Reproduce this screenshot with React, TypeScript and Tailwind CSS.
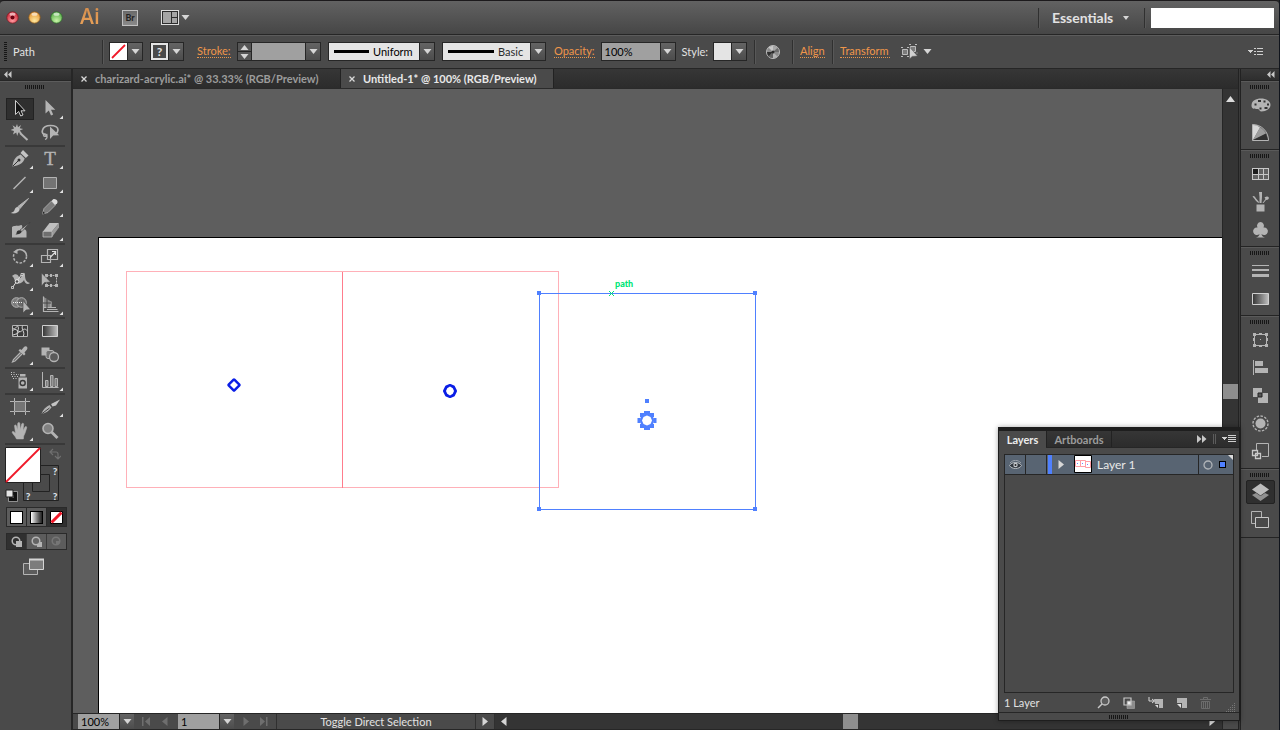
import type { ReactNode } from "react";

const UP = "#b4b4b4";

/* ---------- small shared pieces ---------- */

function Tri({ dir = "down", className = "fill-[#d6d6d6]" }: { dir?: "down" | "up" | "left" | "right"; className?: string }) {
  const d = {
    down: "M.5 2h8L4.500 7z",
    up: "M.5 7h8L4.500 2z",
    left: "M7.500 0v9L2 4.500z",
    right: "M1.500 0v9L7 4.500z",
  }[dir];
  return (
    <svg width="9" height="9" viewBox="0 0 9 9" className={className} aria-hidden="true">
      <path d={d} />
    </svg>
  );
}

function DropArrow({ label }: { label: string }) {
  return (
    <button aria-label={label} className="flex w-[15px] shrink-0 items-center justify-center border-l border-[#262626] bg-linear-to-b from-[#646464] to-[#4c4c4c]">
      <Tri />
    </button>
  );
}

function Divider({ className = "" }: { className?: string }) {
  return <span className={"w-[2px] shrink-0 border-l border-[#303030] bg-[#585858] " + className} />;
}

function Grip() {
  return <span className="mx-auto block h-[4px] w-[20px] bg-[repeating-linear-gradient(90deg,#161616_0_1px,#4a4a4a_1px_2px)]" />;
}

const field = "flex h-[19px] shrink-0 border border-[#262626]";
const link = "shrink-0 border-b border-dotted border-[#e8944a] text-[#f0964a] leading-3 whitespace-nowrap";

/* ---------- title bar ---------- */

function Light({ id, light, dark, ring, dot }: { id: string; light: string; dark: string; ring: string; dot?: boolean }) {
  return (
    <button aria-label={id}>
      <svg width="13" height="13" viewBox="0 0 13 13">
        <defs>
          <radialGradient id={id} cx="50%" cy="78%" r="70%">
            <stop offset="0" stopColor={light} />
            <stop offset="1" stopColor={dark} />
          </radialGradient>
        </defs>
        <circle cx="6.500" cy="6.500" r="5.700" fill={`url(#${id})`} stroke={ring} strokeWidth=".8" />
        <ellipse cx="6.500" cy="3.200" rx="3" ry="1.600" fill="#fff" opacity=".6" />
        {dot && <circle cx="6.500" cy="6.500" r="2" fill="#6c0010" />}
      </svg>
    </button>
  );
}

function TitleBar() {
  return (
    <header className="flex h-[35px] shrink-0 items-center rounded-t border-t border-b border-t-[#1c1a1c] border-b-[#262626] bg-linear-to-b from-[#626262] to-[#464646] pl-[6px]">
      <div className="flex gap-[9px]">
        <Light id="close" light="#ff9aa0" dark="#d02838" ring="#7c1c24" dot />
        <Light id="minimize" light="#ffe9a0" dark="#e89a38" ring="#8a5a20" />
        <Light id="zoom" light="#c8f4a8" dark="#5cb04c" ring="#2f6a2c" />
      </div>
      <span className="ml-[17px] w-[20px] bg-linear-to-b from-[#d08a4c] to-[#f0a85c] bg-clip-text pb-1 font-['Open_Sans'] text-[21px] leading-6 font-semibold text-transparent">Ai</span>
      <button className="ml-[22px] flex h-4 w-4 items-center justify-center border border-[#c0c0c0] bg-linear-to-b from-[#6a6a6a] to-[#8a8a8a] text-[9px] leading-3 font-bold text-[#222]">Br</button>
      <button aria-label="Arrange documents" className="ml-[23px] flex items-center gap-[2px]">
        <svg width="18" height="15" viewBox="0 0 18 15">
          <rect x=".5" y=".5" width="17" height="14" fill="#2c2c2c" stroke="#ddd" />
          <path d="M2 2h8v11H2zM11 2h5v5h-5zM11 8h5v5h-5z" fill="#a4a4a4" />
        </svg>
        <Tri />
      </button>
      <Divider className="ml-auto h-5" />
      <div className="relative ml-[12px] flex w-[77px] items-center">
        <select aria-label="Workspace" className="w-full appearance-none bg-transparent text-[14px] leading-5 font-bold text-[#e2e2e2] outline-none">
          <option>Essentials</option>
        </select>
        <svg width="6" height="4" viewBox="0 0 6 4" className="pointer-events-none absolute right-0 fill-[#d6d6d6]">
          <path d="M0 0h6L3 4z" />
        </svg>
      </div>
      <Divider className="ml-[15px] h-5" />
      <input aria-label="Search" className="mr-[5px] ml-[5px] h-5 w-[123px] bg-white px-1 text-black outline-none" />
    </header>
  );
}

/* ---------- control bar ---------- */

function ControlBar() {
  return (
    <div className="flex h-[34px] shrink-0 items-center border-t border-b border-t-[#5c5c5c] border-b-[#262626] bg-[#4a4a4a] pb-px pl-1">
      <span className="h-5 w-[3px] bg-[repeating-linear-gradient(180deg,#161616_0_1px,#4a4a4a_1px_2px)]" />
      <span className="w-[95px] shrink-0 pl-[6px] text-[#e2e2e2]">Path</span>
      <Divider className="h-6" />

      <div className={field + " ml-[5px]"}>
        <button aria-label="Fill">
          <svg width="17" height="17" viewBox="0 0 17 17">
            <path d="M0 0h17v17H0z" fill="#fff" />
            <path d="M2 15l13-13" stroke="#f01828" strokeWidth="1.800" />
          </svg>
        </button>
        <DropArrow label="Fill options" />
      </div>
      <div className={field + " ml-[7px]"}>
        <button aria-label="Stroke colour" className="w-[17px] border-2 border-[#e4e4e4] bg-[#4a4a4a] text-[12px] leading-3 font-bold text-[#e4e4e4]">?</button>
        <DropArrow label="Stroke colour options" />
      </div>

      <a href="#stroke" className={link + " ml-[13px] min-w-[34px]"}>Stroke:</a>
      <div className={field + " ml-[6px]"}>
        <div className="flex w-[14px] flex-col border-r border-[#262626] bg-[#565656]">
          <button aria-label="Increase stroke" className="flex h-[9px] items-center justify-center border-b border-[#262626]"><Tri dir="up" /></button>
          <button aria-label="Decrease stroke" className="flex h-[8px] items-center justify-center"><Tri /></button>
        </div>
        <input aria-label="Stroke weight" className="w-[53px] bg-[#a0a0a0] px-1 text-black outline-none" />
        <DropArrow label="Stroke weights" />
      </div>

      <div className={field + " ml-[7px] w-[107px] bg-[#e4e4e4]"}>
        <span className="mt-[7px] ml-[5px] h-[3px] w-[35px] shrink-0 bg-black" />
        <select aria-label="Width profile" className="min-w-0 flex-1 appearance-none bg-transparent pl-[4px] text-black outline-none"><option>Uniform</option></select>
        <DropArrow label="Width profiles" />
      </div>
      <div className={field + " ml-[7px] w-[104px] bg-[#e4e4e4]"}>
        <span className="mt-[7px] ml-[5px] h-[3px] w-[46px] shrink-0 bg-black" />
        <select aria-label="Brush" className="min-w-0 flex-1 appearance-none bg-transparent pl-[4px] text-[#2a2a2a] outline-none"><option>Basic</option></select>
        <DropArrow label="Brushes list" />
      </div>

      <a href="#opacity" className={link + " ml-[8px] min-w-[40px]"}>Opacity:</a>
      <div className={field + " ml-[6px]"}>
        <input aria-label="Opacity" defaultValue="100%" className="w-[58px] bg-[#a0a0a0] px-[3px] text-black outline-none" />
        <DropArrow label="Opacity options" />
      </div>
      <span className="ml-[6px] min-w-[26px] text-[#e2e2e2]">Style:</span>
      <div className={field + " ml-[5px]"}>
        <button aria-label="Graphic style" className="w-[17px] bg-[#e4e4e4]" />
        <DropArrow label="Graphic styles" />
      </div>

      <Divider className="ml-[7px] h-6" />
      <button aria-label="Recolor artwork" className="ml-[9px]">
        <svg width="16" height="16" viewBox="0 0 16 16">
          <circle cx="8" cy="8" r="6.500" fill="#8c8c8c" stroke="#bcbcbc" />
          <path d="M8 8L3.500 3.500A6 6 0 0 1 8 2z" fill="#c8c8c8" />
          <path d="M8 8V2A6 6 0 0 1 12.500 4z" fill="#a8a8a8" />
          <path d="M8 8L2 8A6 6 0 0 0 3.700 12.400z" fill="#303030" />
          <path d="M8 8L3.700 12.400A6 6 0 0 0 8 14z" fill="#646464" />
          <path d="M8 8v6A6 6 0 0 0 12.400 12.400z" fill="#b4b4b4" />
          <path d="M8 8L14 8A6 6 0 0 0 12.500 4z" fill="#6c6c6c" />
          <circle cx="8" cy="8" r="1.500" fill="#2c2c2c" />
        </svg>
      </button>
      <Divider className="ml-[11px] h-6" />
      <a href="#align" className={link + " ml-[6px] min-w-[25px]"}>Align</a>
      <Divider className="ml-[7px] h-6" />
      <a href="#transform" className={link + " ml-[6px] min-w-[50px]"}>Transform</a>
      <button aria-label="Select similar" className="ml-[11px] flex items-center gap-[4px]">
        <svg width="18" height="16" viewBox="0 0 18 16">
          <path d="M1.500 5.500h5v5h-5zM9.500 2.500h5v5h-5z" fill="#7c7c7c" stroke="#bcbcbc" />
          <path d="M0 3.500h2M6 3.500h2M0 12.500h2M6 12.500h2M8 .5h2M14 .5h2M15.500 9h1" stroke="#bcbcbc" />
          <path d="M8.500 3v12l2.700-2.600 5.300-.4z" fill="#d0d0d0" stroke="#4a4a4a" strokeWidth=".5" />
        </svg>
        <Tri />
      </button>
      <button aria-label="Control bar menu" className="mr-[16px] ml-auto">
        <svg width="15" height="9" viewBox="0 0 15 9" shapeRendering="crispEdges">
          <path d="M0 3h5L2.500 6z" fill="#d0d0d0" />
          <path d="M6 1h2M6 4h2M6 7h2M9 1h6M9 4h6M9 7h6" transform="translate(0 .5)" stroke="#d0d0d0" />
        </svg>
      </button>
    </div>
  );
}

/* ---------- tools panel ---------- */

type Tool = { name: string; more?: boolean; art: ReactNode };

const groups: Tool[][] = [
  [
    { name: "Selection", art: <path d="M10.500 3.500v14l3.200-3 2 4.500 2.300-1-2-4.200h4z" fill="#141414" stroke="#cfcfcf" /> },
    { name: "Direct Selection", more: true, art: <path d="M10.500 3v13.500l3.300-3 2.200 5 2.200-1-2.200-4.700h4.300z" fill={UP} /> },
    {
      name: "Magic Wand",
      art: (
        <>
          <path d="M12 3l1 3.200L16 4l-1.300 3.300 3.500.7-3.300 1.500 2 3-3.500-1-1.200 3.500-1-3.500L8 13.500l1-3.500-3.400-1L9 7.500 7.500 4.200l3.200 2z" fill={UP} />
          <path d="M15 12l7.500 7" stroke={UP} strokeWidth="2" />
        </>
      ),
    },
    {
      name: "Lasso",
      art: (
        <>
          <path d="M12 14.500c-4-.5-5.500-3-4.500-5.500 1-3 4-4.500 8-4.500 4.500 0 7.500 2 7.500 4.500 0 1.500-1 3-2.500 4" fill="none" stroke={UP} strokeWidth="1.700" />
          <path d="M12 14.500c-1-2.500-4-2-3.500 0 .5 1.500 3 1 3.500 0 .3 2-.5 3.500-2 4" fill="none" stroke={UP} strokeWidth="1.200" />
          <path d="M15 5.500v12.500l3.200-3.500 6-.2z" fill={UP} />
        </>
      ),
    },
  ],
  [
    {
      name: "Pen",
      more: true,
      art: (
        <>
          <path d="M7.500 19.500c.5-6 2.500-9.500 8.200-12l4 4C18 16.500 14 18.500 7.500 19.500z" fill={UP} />
          <path d="M15.500 6l2.500-3 5.500 5.500-2.700 2.500z" fill="#c4c4c4" />
          <path d="M8 19l5.500-5.500" stroke="#333" />
          <circle cx="14" cy="13" r="1.500" fill="#333" />
        </>
      ),
    },
    { name: "Type", more: true, art: <text x="15" y="18" textAnchor="middle" fontFamily="Liberation Serif, serif" fontSize="19" fill={UP} stroke={UP} strokeWidth=".4">T</text> },
    { name: "Line Segment", more: true, art: <path d="M8.500 18L20.500 6" stroke={UP} strokeWidth="1.400" /> },
    { name: "Rectangle", more: true, art: <path d="M8.500 6.500h13v11h-13z" fill="#747474" stroke={UP} /> },
    {
      name: "Paintbrush",
      art: (
        <>
          <path d="M23.500 3.500L15 13.500l-2-2z" fill={UP} stroke={UP} />
          <path d="M12.500 12c1.500 0 2.500 1.500 2 3-1 3-5 4-9 3 3-1 3.500-1.500 4.200-3.500.5-1.500 1.500-2.500 2.800-2.500z" fill="#c4c4c4" />
        </>
      ),
    },
    {
      name: "Pencil",
      more: true,
      art: (
        <>
          <path d="M7.500 19l1.500-5.500L16.500 6l4 4-7.500 7.500z" fill="#7c7c7c" stroke={UP} strokeWidth=".8" />
          <path d="M16.500 6c1.500-2.500 3-2.500 4.500-1.500s2 2.500 1 4l-2 1.500z" fill="#dcdcdc" />
          <path d="M7.500 19l.8-2.500 1.700 1.700z" fill="#222" />
        </>
      ),
    },
    {
      name: "Blob Brush",
      art: (
        <>
          <path d="M7 8c2-2 6-.5 9-2 1.500 0 1.500 2 1 3.500 3 .5 4.500 1.500 4.500 3.500v5.500H7z" fill={UP} />
          <path d="M11.500 14.500c0-3.500 3-4 4.500-2.700s-.5 4-5.500 3.700z" fill="#333" />
          <path d="M25 3.500L17 12.500l-2-1.500z" fill={UP} stroke="#333" strokeWidth=".6" />
        </>
      ),
    },
    {
      name: "Eraser",
      more: true,
      art: (
        <>
          <path d="M14.500 4h9.500L17 12.500H8z" fill="#c0c0c0" />
          <path d="M24 4v4.500L17 18v-5.500z" fill="#9a9a9a" />
          <path d="M8 12.500h9V18H8z" fill="#6e6e6e" stroke="#bcbcbc" strokeWidth=".8" />
        </>
      ),
    },
  ],
  [
    {
      name: "Rotate",
      more: true,
      art: (
        <>
          <path d="M10.500 6.500A6.500 6.500 0 0 1 21.500 11.500" fill="none" stroke={UP} strokeWidth="1.500" />
          <path d="M21.500 11.500A6.500 6.500 0 1 1 9 9" fill="none" stroke={UP} strokeWidth="1.500" strokeDasharray="2.500 1.500" />
          <path d="M8 7l4.500-3v5z" fill={UP} />
        </>
      ),
    },
    {
      name: "Scale",
      more: true,
      art: (
        <>
          <path d="M12.500 4.500h10v10h-10zM6.500 10.500h9v7h-9z" fill="none" stroke={UP} strokeWidth="1.200" />
          <path d="M15 12.500l5-5M17 6.500h3.500V10" fill="none" stroke="#e0e0e0" strokeWidth="1.200" />
        </>
      ),
    },
    {
      name: "Width",
      more: true,
      art: (
        <>
          <path d="M7 7c3-3 6-2 7 1 1 2 2 1 3-2s3-3 3 0c0 4 1 7 5 8-2 2-5 1-6-3-2 4-7 5-9 1-1-2-1-4-3-5z" fill={UP} />
          <path d="M7.500 18.500l9-13" stroke="#ddd" />
          <path d="M6.500 17.500h2v2h-2zM16 4.500h2v2h-2z" fill="#4a4a4a" stroke="#ddd" strokeWidth=".8" />
          <circle cx="12" cy="12.500" r="1.800" fill="#4a4a4a" stroke="#eee" />
        </>
      ),
    },
    {
      name: "Free Transform",
      art: (
        <>
          <path d="M11.500 6.500h10v10h-10z" fill="none" stroke={UP} strokeDasharray="2 1" />
          <path d="M10 5h3v3h-3zM20 5h3v3h-3zM10 15h3v3h-3zM20 15h3v3h-3zM15 5h2v3h-2zM15 15h2v3h-2z" fill={UP} />
          <path d="M6.500 4v13l3-3.500 6-.5z" fill={UP} stroke="#444" strokeWidth=".5" />
        </>
      ),
    },
    {
      name: "Shape Builder",
      more: true,
      art: (
        <>
          <circle cx="11.500" cy="9.500" r="4.800" fill="#7c7c7c" stroke={UP} />
          <circle cx="16.500" cy="9.500" r="4.800" fill="#6a6a6a" stroke={UP} />
          <path d="M8 9.500h11" stroke="#f0f0f0" strokeDasharray="1 1" />
          <path d="M18 7.500v12.500l3-3 4.500-.5z" fill={UP} stroke="#444" strokeWidth=".6" />
        </>
      ),
    },
    {
      name: "Perspective Grid",
      more: true,
      art: (
        <>
          <path d="M8 3.500l8 5V15H8z" fill={UP} opacity=".6" />
          <path d="M8.500 3.500v15.500M16 8.500V15M8 14.500h13M8 18.500h15.500M12 16.500h10.500" fill="none" stroke={UP} strokeWidth="1.200" />
          <path d="M12 6v9M8 10h8" stroke="#444" />
        </>
      ),
    },
  ],
  [
    {
      name: "Mesh",
      art: (
        <>
          <path d="M7.500 6.500h15v11h-15z" fill="#3a3a3a" stroke={UP} />
          <path d="M7.500 12c3-5 6 3 9 0s4-2 6 0M12 6.500c4 3-2 7 1 11M18 6.500c-3 3 3 7 0 11M7.500 9c2 2 3 0 5-2M8 16c3-1 5-1 7-4" fill="none" stroke="#d4d4d4" />
        </>
      ),
    },
    { name: "Gradient", art: <path d="M7.500 6.500h15v11h-15z" fill="url(#ramp)" stroke="#d0d0d0" /> },
    {
      name: "Eyedropper",
      more: true,
      art: (
        <>
          <path d="M15.500 9.500l-7 7-1 2.500 2.500-1 7-7" fill="#5a5a5a" stroke={UP} strokeWidth="1.200" />
          <path d="M13.500 7.500l1.500-1.500 1.500 1L19 4c2-2 4.500.5 3 2.500L19.500 9.500l1 1.500-1.500 1.500z" fill={UP} />
        </>
      ),
    },
    {
      name: "Blend",
      art: (
        <>
          <path d="M6.500 4.500h8v8h-8z" fill={UP} />
          <rect x="11" y="7.500" width="8" height="8" rx="2" fill="#707070" stroke={UP} />
          <circle cx="19" cy="14" r="4.500" fill="#5a5a5a" stroke={UP} strokeWidth="1.300" />
        </>
      ),
    },
  ],
  [
    {
      name: "Symbol Sprayer",
      more: true,
      art: (
        <>
          <path d="M13.500 8.500h8.500v11h-8.500z" fill={UP} />
          <path d="M15 7.500h5.500V5H15z" fill={UP} />
          <circle cx="17.700" cy="14" r="2.500" fill="none" stroke="#3a3a3a" strokeWidth="1.400" />
          <path d="M6 5.500h8M7 7.500h7M6 3.500h5M8 9.500h5" stroke="#c8c8c8" strokeDasharray="1 1.500" />
        </>
      ),
    },
    {
      name: "Column Graph",
      more: true,
      art: (
        <>
          <path d="M7.500 3v15.500h16" fill="none" stroke={UP} />
          <path d="M10.500 11.500h2.500v6h-2.500zM15.500 6.500h2.500v11h-2.500zM20 9.500h2.500v8H20z" fill="#7a7a7a" stroke={UP} />
        </>
      ),
    },
  ],
  [
    {
      name: "Artboard",
      art: (
        <>
          <path d="M9.500 6.500h11v10h-11z" fill="#747474" stroke={UP} />
          <path d="M9.500 3v3M20.500 3v3M9.500 17v3M20.500 17v3M5 6.500h4M5 16.500h4M21 6.500h4M21 16.500h4" stroke={UP} />
        </>
      ),
    },
    {
      name: "Slice",
      more: true,
      art: (
        <>
          <path d="M6.500 19c1-4 4-7 8-9l2 2.500C14 16 11 18 6.500 19z" fill={UP} />
          <path d="M16 9l9-4.500-4 6-3.500 1z" fill="#c4c4c4" />
          <path d="M6.500 19l8-6" stroke="#444" />
        </>
      ),
    },
    {
      name: "Hand",
      more: true,
      art: <path d="M11.500 20c-1-3-4-5-4.500-7 .5-1 2-.5 3.500 1.200L9.500 7c0-1.500 1.500-1.500 2 0l1 4 .2-6.500c.3-1.500 2-1.500 2.200 0l.3 6 1.500-5.500c.5-1.300 2-1 2 .5l-.7 6 2-3.500c1-1 2-.3 1.700 1-1 3-1.700 6-3 8l-.3 3z" fill={UP} stroke={UP} strokeWidth=".5" />,
    },
    {
      name: "Zoom",
      art: (
        <>
          <circle cx="13" cy="9.500" r="5" fill="#808080" stroke={UP} strokeWidth="1.600" />
          <path d="M16.500 13l6 6" stroke={UP} strokeWidth="2.800" />
        </>
      ),
    },
  ],
];

function ToolsPanel() {
  return (
    <aside className="flex w-[71px] shrink-0 flex-col bg-[#4a4a4a]">
      <button aria-label="Collapse tools" className="h-[12px] border-b border-[#262626] bg-linear-to-b from-[#3a3a3a] to-[#2e2e2e] pl-[4px]">
        <svg width="8" height="7" viewBox="0 0 8 7" fill="#c8c8c8"><path d="M3.500 0v7L0 3.500zM7.500 0v7L4 3.500z" /></svg>
      </button>
      <div className="border-t border-[#5c5c5c] pt-[3px] pr-[2px] pb-[8px]"><Grip /></div>
      <div className="flex flex-col pr-[6px] pl-[5px]">
        {groups.map((tools, g) => (
          <div key={g} className="grid grid-cols-2 border-b-2 border-[#393939]">
            {tools.map((tool) => (
              <button key={tool.name} aria-label={tool.name} className="flex h-6 items-center justify-center">
                <svg width="30" height="24" viewBox="0 0 30 24">
                  {tool.name === "Selection" && <rect x="1.500" y="1.500" width="27" height="21" fill="#2f2f2f" stroke="#222" />}
                  {tool.art}
                  {tool.more && <path d="M28 18.500v3.500h-3.500z" fill="#e0e0e0" />}
                </svg>
              </button>
            ))}
          </div>
        ))}

        <button aria-label="Fill and stroke" className="mt-[2px]">
          <svg width="56" height="56" viewBox="0 0 56 56" className="text-[10px] font-black">
            <path d="M18.500 18.500h35v35h-35zM27.500 27.500h17v17h-17z" fill="#4a4a4a" stroke="#222" />
            <g fill="#dce0ec" textAnchor="middle">
              <text x="50" y="28">?</text>
              <text x="23" y="53">?</text>
              <text x="50" y="53">?</text>
            </g>
            <path d="M.5.500h35v35H.500z" fill="#fff" stroke="#222" />
            <path d="M1 35L35 1" stroke="#f01828" strokeWidth="1.800" />
            <path d="M46 5h5q2 0 2 2v4M48 2l-3 3 3 3M50 9l3 3 3-3" fill="none" stroke="#707070" strokeWidth="1.200" />
            <path d="M5.500 46.500h5v6h-5z" fill="#4a4a4a" stroke="#111" strokeWidth="3" />
            <path d="M3.500 44.500h9v10h-9z" fill="none" stroke="#c0c0c0" strokeWidth=".6" />
            <path d="M1 43h7v7H1z" fill="#e4e4e4" stroke="#222" />
          </svg>
        </button>

        <div className="mt-[4px] ml-px flex w-[61px] border border-[#2a2a2a] bg-[#5c5c5c]">
          <button aria-label="Color" className="flex h-[18px] flex-1 items-center justify-center border-r border-[#2a2a2a]"><span className="h-[13px] w-[13px] border border-black bg-white" /></button>
          <button aria-label="Gradient fill" className="flex h-[18px] flex-1 items-center justify-center border-r border-[#2a2a2a]"><span className="h-[13px] w-[13px] border border-black bg-linear-to-r from-white to-[#222]" /></button>
          <button aria-label="None" className="flex h-[18px] flex-1 items-center justify-center bg-[#303030]">
            <svg width="13" height="13" viewBox="0 0 13 13"><path d="M.5.500h12v12H.500z" fill="#fff" stroke="#000" /><path d="M1.500 11.500l10-10" stroke="#f01828" strokeWidth="3" /></svg>
          </button>
        </div>
        <div className="mt-[6px] ml-px flex w-[61px] border border-[#2a2a2a] bg-[#5c5c5c]">
          {["Draw Normal", "Draw Behind", "Draw Inside"].map((name, i) => (
            <button key={name} aria-label={name} className={"flex h-[15px] flex-1 items-center justify-center " + (i === 0 ? "bg-[#303030]" : "border-l border-[#3a3a3a]")}>
              <svg width="13" height="13" viewBox="0 0 13 13" opacity={i === 2 ? 0.3 : 1}>
                {i === 1 && <path d="M7 7h5v5H7z" fill={UP} />}
                <circle cx="6" cy="6" r="3.800" fill={i === 0 ? "none" : "#646464"} stroke="#b4b4b4" strokeWidth="1.500" />
                {i === 0 && <path d="M6 6h6v6H6z" fill={UP} />}
                {i === 2 && <path d="M6 6h4a4 4 0 0 1-4 4z" fill={UP} />}
              </svg>
            </button>
          ))}
        </div>
        <button aria-label="Screen mode" className="mt-[8px] ml-[18px] w-[21px]">
          <svg width="21" height="17" viewBox="0 0 21 17">
            <path d="M.5 5.500h14v11H.500z" fill="#5c5c5c" stroke={UP} />
            <path d="M6.500 1.500h14v10h-14z" fill="#7c7c7c" stroke="#d4d4d4" />
            <path d="M6 1.500h15" stroke="#d4d4d4" strokeWidth="2" />
          </svg>
        </button>
      </div>
    </aside>
  );
}

/* ---------- document ---------- */

function Tabs() {
  return (
    <nav className="flex h-5 shrink-0 border-b border-[#2a2a2a] bg-linear-to-b from-[#363636] to-[#2c2c2c] font-bold whitespace-nowrap">
      {["charizard-acrylic.ai* @ 33.33% (RGB/Preview)", "Untitled-1* @ 100% (RGB/Preview)"].map((title, i) => (
        <div key={title} className={"flex items-center border-r border-[#222] pl-[8px] " + (i ? "min-w-[213px] bg-[#4a4a4a] text-[#e8e8e8]" : "min-w-[268px] text-[#9c9c9c]")}>
          <button aria-label="Close document" className="mr-[8px]">
            <svg width="6" height="6" viewBox="0 0 6 6" stroke="#d8d8d8" strokeWidth="1.300"><path d="M.5.500l5 5M5.500.5l-5 5" /></svg>
          </button>
          <button>{title}</button>
        </div>
      ))}
    </nav>
  );
}

const blue = "#4f80ff";
const ink = "#0a1ee6";

function Artboard() {
  return (
    <div className="relative min-w-0 flex-1 overflow-hidden bg-[#5e5e5e] pt-[148px] pl-[25px]">
      <div className="h-full border-t border-l border-black bg-white">
        <svg className="h-full w-full">
          <g fill="none" shapeRendering="crispEdges" strokeWidth="1">
            <path d="M243.500 33.500H27.500v216h216M243.500 33.500h216v216h-216" stroke="#ffb0b8" />
            <path d="M243.500 33.500v216" stroke="#ff7c8c" />
            <path d="M440.500 55.500h216v216h-216z" stroke={blue} />
          </g>
          <g shapeRendering="crispEdges" fill={blue}>
            <path d="M438 53h4v4h-4zM654 53h4v4h-4zM438 269h4v4h-4zM654 269h4v4h-4zM546 161h4v4h-4z" />
          </g>
          <path d="M135 142l5 5-5 5-5-5z" fill={ink} stroke={ink} strokeWidth="3.500" strokeLinejoin="round" />
          <path d="M135 143l4 4-4 4-4-4z" fill="#fff" />
          <path d="M351 147.500l3.500 1.500 2 4-2 4-3.500 1.500-3.500-1.500-2-4 2-4z" fill={ink} stroke={ink} strokeWidth="3" strokeLinejoin="round" />
          <path d="M351 148.500l2.800 1.700 1.200 2.800-1.200 2.800-2.800 1.700-2.800-1.700-1.200-2.800 1.200-2.800z" fill="#fff" />
          <circle cx="548" cy="182.500" r="7" fill={blue} />
          <path d="M545 173h6v3h-6zM545 189h6v3h-6zM538.500 180h3v5h-3zM554.500 180h3v5h-3zM541 175h4v4h-4zM551 175h4v4h-4zM541 186h4v4h-4zM551 186h4v4h-4z" fill={blue} />
          <path d="M548 177.500l3.500 1.500 1.500 3.500-1.500 3.500-3.500 1.500-3.500-1.500-1.500-3.500 1.500-3.500z" fill="#fff" />
          <path d="M510 53l5 5M515 53l-5 5" stroke="#00e676" />
          <text x="516" y="49" fill="#00e676" className="text-[9px] font-black">path</text>
        </svg>
      </div>
    </div>
  );
}

function VerticalScroll() {
  return (
    <div className="flex w-4 shrink-0 flex-col items-center border-l border-[#262626] bg-[#343434] pt-[5px]">
      <button aria-label="Scroll up">
        <svg width="11" height="9" viewBox="0 0 11 9" fill="#dcdcdc"><path d="M1 8h9L5.500 2z" /></svg>
      </button>
      <span className="mt-[281px] h-[15px] w-[15px] bg-[#8e8e8e]" />
    </div>
  );
}

function StatusBar() {
  const nav = "flex items-center justify-center";
  return (
    <footer className="flex h-[17px] shrink-0 items-stretch border-t border-b border-[#262626] bg-[#4a4a4a] pl-[5px]">
      <input aria-label="Zoom level" defaultValue="100%" className="w-[41px] bg-[#a0a0a0] px-[3px] text-black outline-none" />
      <DropArrow label="Zoom levels" />
      <button aria-label="First artboard" className={nav + " ml-[8px]"}>
        <svg width="9" height="9" viewBox="0 0 9 9" fill="#6e6e6e"><path d="M0 0h1.500v9H0zM8 0v9L3 4.500z" /></svg>
      </button>
      <button aria-label="Previous artboard" className={nav + " ml-[9px]"}><Tri dir="left" className="fill-[#6e6e6e]" /></button>
      <input aria-label="Artboard number" defaultValue="1" className="ml-[9px] w-[41px] bg-[#a0a0a0] px-[3px] text-black outline-none" />
      <DropArrow label="Artboards list" />
      <button aria-label="Next artboard" className={nav + " ml-[8px]"}><Tri dir="right" className="fill-[#6e6e6e]" /></button>
      <button aria-label="Last artboard" className={nav + " ml-[8px]"}>
        <svg width="9" height="9" viewBox="0 0 9 9" fill="#6e6e6e"><path d="M7 0h1.500v9H7zM1 0v9l5-4.500z" /></svg>
      </button>
      <span className="ml-[8px] w-[200px] border-x border-[#303030] text-center text-[#e2e2e2]">Toggle Direct Selection</span>
      <button aria-label="Status options" className={nav + " w-[19px] border-r border-[#303030]"}><Tri dir="right" /></button>
      <div className="flex flex-1 items-center bg-[#343434] pl-[4px]">
        <button aria-label="Scroll left"><Tri dir="left" /></button>
        <span className="ml-[335px] h-full w-[15px] bg-[#8e8e8e]" />
        <button aria-label="Scroll right" className="mr-[5px] ml-auto"><Tri dir="right" /></button>
      </div>
      <span className="w-4 border-l border-[#262626]" />
    </footer>
  );
}

/* ---------- right dock ---------- */

const dock: { name: string; art: ReactNode }[][] = [
  [
    {
      name: "Color",
      art: (
        <>
          <path d="M12 4.500c5 0 9.500 2.500 9.500 6.500 0 3.500-4 6.500-9 6.500-2 0-2-2-3.500-2.500-2-.5-6.500 1-6.500-3.500C2.500 6.500 7 4.500 12 4.500z" fill={UP} />
          <path d="M9 6h3v2H9zM14.500 6.500h2v2h-2zM5.500 9.500h2v2h-2zM18 9.500h2v2h-2zM15.500 13h3v2h-3zM10.500 13.500h2v2h-2z" fill="#333" />
        </>
      ),
    },
    {
      name: "Color Guide",
      art: (
        <>
          <path d="M3.500 2.500c9 0 16 7 16 16h-16z" fill="#6a6a6a" stroke={UP} />
          <path d="M4 18V3c3 0 5 .8 7 2.500z" fill="#d8d8d8" />
          <path d="M4 18L11 5.500c3 1.500 4.500 3.500 6 6z" fill="#9c9c9c" />
          <path d="M4 18l13-6.500 2 6.500z" fill="#303030" />
        </>
      ),
    },
  ],
  [
    {
      name: "Swatches",
      art: (
        <>
          <path d="M3 5h17v12H3z" fill="#c8c8c8" />
          <path d="M4 6h5v5H4z" fill="#1c1c1c" />
          <path d="M10 6h4v5h-4zM15 6h4v5h-4zM4 12h5v4H4zM10 12h4v4h-4zM15 12h4v4h-4z" fill="#626262" />
        </>
      ),
    },
    {
      name: "Brushes",
      art: (
        <>
          <path d="M7.500 13.500h8v7h-8zM10 1h3v5l-.5 6h-2V6z" fill={UP} />
          <path d="M9.500 12C7.500 11 6.500 9 3.500 5.500 4.500 4 6.500 6 7 7.500L10 11zM13.500 12l3-4-1-1.500c2-1 3-1.500 4-.5 1 1 0 3-2.500 3L14.500 12z" fill={UP} />
        </>
      ),
    },
    {
      name: "Symbols",
      art: <path d="M11.500 3a3.700 3.700 0 0 1 3 5.500 3.800 3.800 0 1 1-2 6.500c.3 2 1.300 2.700 3.500 3.500h-9c2.200-.8 3.200-1.500 3.500-3.500a3.800 3.800 0 1 1-2-6.500 3.700 3.700 0 0 1 3-5.500z" fill={UP} />,
    },
  ],
  [
    { name: "Stroke", art: <path d="M3 5h17v1H3zM3 9h17v2H3zM3 14h17v3H3z" fill={UP} shapeRendering="crispEdges" /> },
    { name: "Gradient", art: <path d="M3.500 5.500h16v11h-16z" fill="url(#ramp)" stroke="#d0d0d0" /> },
  ],
  [
    {
      name: "Transform",
      art: (
        <>
          <path d="M5.500 5.500h12v11h-12z" fill="none" stroke={UP} />
          <path d="M4 4h3v3H4zM16 4h3v3h-3zM4 15h3v3H4zM16 15h3v3h-3zM10 4h3v2h-3zM10 16h3v2h-3zM4 9h2v3H4zM17 9h2v3h-2zM11 10h1v1h-1z" fill={UP} />
        </>
      ),
    },
    { name: "Align", art: <path d="M4 3h1v15H4zM6 4h8v5H6zM6 11h13v5H6z" fill={UP} /> },
    {
      name: "Pathfinder",
      art: (
        <>
          <path d="M4 3h9v9H4zM9 8h10v10H9z" fill={UP} />
          <path d="M9 8h4v4H9z" fill="#555" stroke="#222" />
        </>
      ),
    },
    {
      name: "Appearance",
      art: (
        <>
          <circle cx="11.500" cy="10.500" r="5" fill={UP} />
          <circle cx="11.500" cy="10.500" r="7.500" fill="none" stroke={UP} strokeWidth="1.400" strokeDasharray="2.500 1.400" />
        </>
      ),
    },
    {
      name: "Graphic Styles",
      art: (
        <>
          <path d="M7.500 9V2.500h12v13H13" fill="none" stroke={UP} />
          <path d="M3.500 9.500h5v5h-5zM6.500 12.500h5v5h-5z" fill="#4a4a4a" stroke="#c8c8c8" strokeWidth="1.300" />
        </>
      ),
    },
  ],
  [
    {
      name: "Layers",
      art: (
        <>
          <path d="M3 13l4-2 4.500 3L16 11l4 2-8.500 6z" fill="#909090" />
          <path d="M11.500 1.500l8.500 6-8.500 6L3 7.500z" fill="#bcbcbc" />
        </>
      ),
    },
    {
      name: "Artboards",
      art: (
        <>
          <path d="M2.500 1.500h10v12h-10z" fill="none" stroke={UP} />
          <path d="M6.500 7.500h13v10h-13z" fill="#4a4a4a" stroke="#c8c8c8" />
        </>
      ),
    },
  ],
];

function Dock() {
  return (
    <aside className="flex w-[38px] shrink-0 flex-col bg-[#4a4a4a]">
      <button aria-label="Expand panels" className="flex h-[11px] items-center justify-end bg-linear-to-b from-[#3a3a3a] to-[#2e2e2e] pr-[4px]">
        <svg width="8" height="7" viewBox="0 0 8 7" fill="#c8c8c8"><path d="M3.500 0v7L0 3.500zM7.500 0v7L4 3.500z" /></svg>
      </button>
      {dock.map((items, g) => (
        <div key={g} className="flex flex-col items-center border-t border-[#242424]">
          <div className="w-full border-t border-[#5a5a5a] pt-[3px] pb-[2px]"><Grip /></div>
          {items.map((item) => (
            <button key={item.name} aria-label={item.name} className="flex h-7 w-[30px] items-center justify-center">
              <svg width="30" height="26" viewBox="-4 -2 30 26">
                {item.name === "Layers" && <rect x="-2.500" y="-1.500" width="28" height="23" rx="1.500" fill="#2f2f2f" stroke="#222" />}
                {item.art}
              </svg>
            </button>
          ))}
          <span className="h-[2px]" />
        </div>
      ))}
      <span className="border-t border-[#242424]" />
    </aside>
  );
}

/* ---------- floating layers panel ---------- */

function LayersPanel() {
  return (
    <section className="absolute right-[39px] bottom-[9px] flex h-[294px] w-[242px] flex-col border border-t-4 border-[#1e1e1e] bg-[#4a4a4a] shadow-[0_0_5px_rgba(0,0,0,0.35)]">
      <div className="flex h-[17px] items-stretch border-b border-[#262626] bg-linear-to-b from-[#363636] to-[#2c2c2c] font-bold">
        <button className="-mb-px w-[47px] bg-[#4a4a4a] text-[#ececec]">Layers</button>
        <button className="w-[66px] border-x border-[#222] text-[#9c9c9c]">Artboards</button>
        <button aria-label="Collapse panel" className="ml-auto">
          <svg width="10" height="8" viewBox="0 0 10 8" fill="#c8c8c8"><path d="M0 0v8l4.500-4zM5 0v8l4.500-4z" /></svg>
        </button>
        <span className="mx-[6px] my-[3px] w-[3px] border-x border-[#5c5c5c]" />
        <button aria-label="Panel menu" className="mr-[3px]">
          <svg width="14" height="8" viewBox="0 0 14 8" shapeRendering="crispEdges"><path d="M0 2h5L2.500 5zM6 0h8v1H6zM6 2h8v1H6zM6 4h8v1H6zM6 6h8v1H6z" fill="#d0d0d0" /></svg>
        </button>
      </div>

      <div className="mx-[5px] mt-[6px] flex-1 border border-[#262626]">
        <div className="flex h-5 items-stretch border-b border-[#262626] bg-[#586472] text-[12px] text-[#e8e8e8]">
          <button aria-label="Toggle visibility" className="flex w-[21px] items-center justify-center border-r border-[#262626]">
            <svg width="13" height="10" viewBox="0 0 13 10">
              <path d="M.5 5.500C3 1.500 10 1.500 12.500 5.500 10 9.500 3 9.500.500 5.500z" fill="#30363e" stroke="#b8bcc0" />
              <circle cx="6.500" cy="5" r="2.200" fill="#c8ccd0" />
              <circle cx="6.500" cy="5" r="1" fill="#222" />
              <path d="M1 3C4-.5 9-.5 12 3" fill="none" stroke="#9aa0a8" />
            </svg>
          </button>
          <button aria-label="Toggle lock" className="w-[21px] border-r border-[#262626]" />
          <span className="ml-px w-[4px] bg-[#4f80ff]" />
          <button aria-label="Expand layer" className="ml-[5px] flex items-center"><Tri dir="right" /></button>
          <svg width="18" height="18" viewBox="0 0 18 18" className="ml-[8px]">
            <path d="M.5.500h17v17H.500z" fill="#fff" stroke="#000" />
            <path d="M1.500 5.500h5v6h-5zM6.500 5.500h5v6h-5zM11.500 6.500h5v6h-5z" fill="none" stroke="#ff9ca4" />
            <path d="M3 8h1v1H3zM8 8h1v1H8zM13 9h1v1h-1z" fill="#7080ff" />
          </svg>
          <span className="ml-[5px] flex-1 self-center">Layer 1</span>
          <span className="relative flex w-[35px] items-center gap-[6px] border-l border-[#262626] pl-[4px]">
            <svg width="10" height="10" viewBox="0 0 10 10"><circle cx="5" cy="5" r="4" fill="none" stroke="#b0b4b8" strokeWidth="1.300" /></svg>
            <span className="h-[7px] w-[7px] border border-black bg-[#4f80ff]" />
            <svg width="5" height="5" className="absolute top-0 right-0"><path d="M0 0h5v5z" fill="#dcdcdc" /></svg>
          </span>
        </div>
      </div>

      <div className="flex h-[19px] items-center gap-[13px] pr-[3px] pl-[5px] text-[#e2e2e2]">
        <span className="mr-auto">1 Layer</span>
        <button aria-label="Locate object">
          <svg width="13" height="13" viewBox="0 0 13 13"><circle cx="8" cy="5" r="4" fill="#5c5c5c" stroke="#c8c8c8" strokeWidth="1.300" /><path d="M5 8l-4 4" stroke="#c8c8c8" strokeWidth="1.500" /></svg>
        </button>
        <button aria-label="Clipping mask">
          <svg width="12" height="12" viewBox="0 0 12 12"><path d="M4 4h7.500v7.500H4z" fill="#8c8c8c" stroke="#a8a8a8" strokeWidth=".6" /><path d="M1 1h7v7H1z" fill="none" stroke="#c8c8c8" strokeWidth="1.200" /><path d="M4.500 4.500h3v3h-3z" fill="#eee" /></svg>
        </button>
        <button aria-label="New sublayer">
          <svg width="15" height="12" viewBox="0 0 15 12"><path d="M6 2h9v9h-4V7H7z" fill={UP} /><path d="M7 8h3v3z" fill="#ddd" /><path d="M1 0v4h5M4 2l2.500 2L4 6" fill="none" stroke="#d8d8d8" /></svg>
        </button>
        <button aria-label="New layer">
          <svg width="11" height="12" viewBox="0 0 11 12"><path d="M1 1h10v10H6V6H1z" fill={UP} /><path d="M1 7h4v4z" fill="#e0e0e0" /></svg>
        </button>
        <button aria-label="Delete" disabled className="mr-[2px]">
          <svg width="11" height="12" viewBox="0 0 11 12" fill="none" stroke="#6c6c6c"><path d="M0 2.500h11M3.500 2V.5h4V2M1.500 4.500h8v7h-8zM3.500 5v6M5.500 5v6M7.500 5v6" /></svg>
        </button>
        <svg width="10" height="10" viewBox="0 0 10 10" className="self-end" stroke="#777" strokeDasharray="1 1">
          <path d="M8 1.500h2M6 3.500h4M4 5.500h6M2 7.500h8M0 9.500h10" />
        </svg>
      </div>
      <div className="h-[8px] border-t border-[#262626] pt-[2px]"><Grip /></div>
    </section>
  );
}

export default function App() {
  return (
    <div className="relative flex h-screen flex-col overflow-hidden border-r border-[#10141c] bg-[#262626] font-['Lato','Open_Sans',sans-serif] text-[11px] leading-[15px]">
      <svg width="0" height="0" className="absolute">
        <defs>
          <linearGradient id="ramp">
            <stop offset="0" stopColor="#333" />
            <stop offset="1" stopColor="#c0c0c0" />
          </linearGradient>
        </defs>
      </svg>
      <TitleBar />
      <ControlBar />
      <div className="flex min-h-0 flex-1">
        <ToolsPanel />
        <main className="ml-[2px] flex min-w-0 flex-1 flex-col">
          <Tabs />
          <div className="flex min-h-0 flex-1">
            <Artboard />
            <VerticalScroll />
          </div>
          <StatusBar />
        </main>
        <span className="w-[3px] shrink-0 border-x border-[#222] bg-[#3a3a3a]" />
        <Dock />
      </div>
      <LayersPanel />
    </div>
  );
}
